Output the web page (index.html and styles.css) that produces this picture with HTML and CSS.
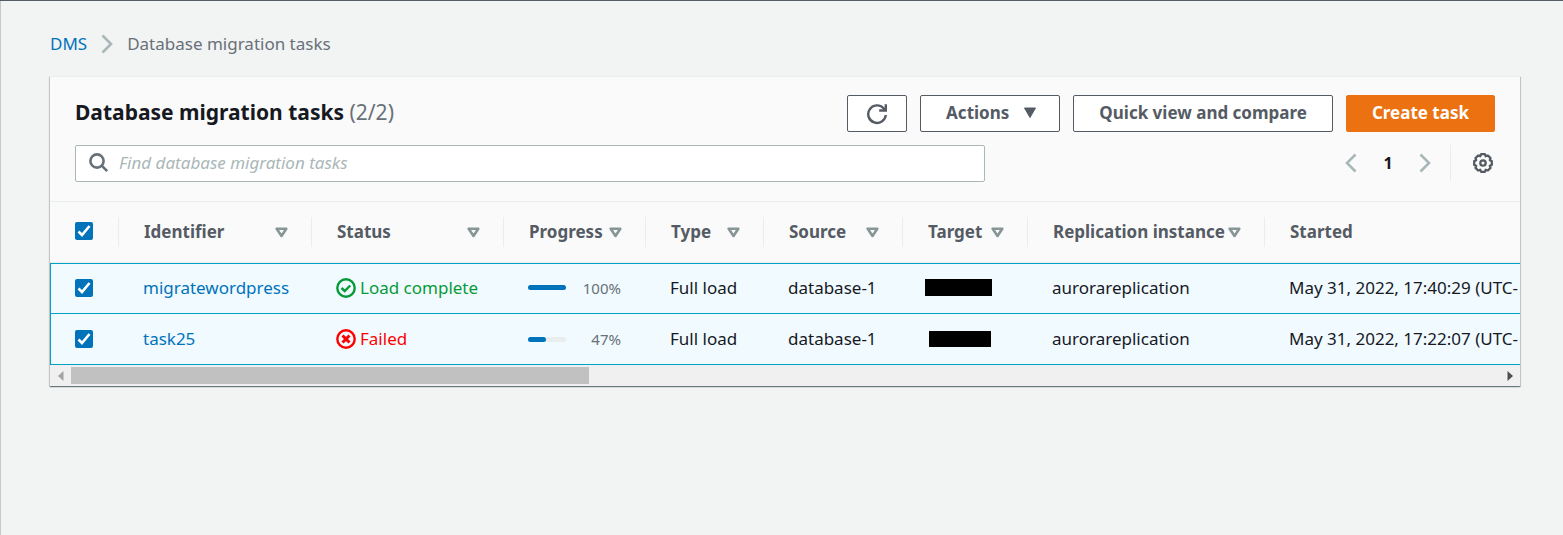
FILE: index.html
```html
<!DOCTYPE html>
<html lang="en">
<head>
<meta charset="utf-8">
<title>Database migration tasks</title>
<link rel="stylesheet" href="styles.css">
</head>
<body>
<svg class="defs" aria-hidden="true">
  <symbol id="sort" viewBox="0 0 13 11"><path d="M1.700 1.700h9.600L6.500 9z" fill="none" stroke="#879596" stroke-width="2.600" stroke-linejoin="round"/></symbol>
  <symbol id="chevron" viewBox="0 0 12 20"><path d="M1.500 1.500 10 10l-8.500 8.500" fill="none" stroke="#aab7b8" stroke-width="2.600"/></symbol>
</svg>
<main class="page">
  <nav class="breadcrumbs" aria-label="Breadcrumbs">
    <a href="#">DMS</a>
    <svg class="crumb-sep" aria-hidden="true"><use href="#chevron"/></svg>
    <span>Database migration tasks</span>
  </nav>
  <section class="card">
    <header class="card-header">
      <div class="title-row">
        <h1>Database migration tasks <span class="count">(2/2)</span></h1>
        <div class="actions">
          <button class="btn btn-icon" type="button" aria-label="Refresh">
            <svg width="22" height="22" viewBox="0 0 22 22" fill="none" stroke="currentColor" stroke-width="2.400"><path d="M19.800 12A8.800 8.800 0 1 1 17.500 5.200L19.500 7.500"/><path d="M19.800 1.200V7.500h-6.600"/></svg>
          </button>
          <button class="btn btn-menu" type="button">Actions <svg width="14" height="12" viewBox="0 0 14 12"><path d="M1.500 1h11L7 10.500z" fill="currentColor" stroke="currentColor" stroke-linejoin="round"/></svg></button>
          <button class="btn" type="button">Quick view and compare</button>
          <button class="btn btn-primary" type="button">Create task</button>
        </div>
      </div>
      <div class="tools-row">
        <label class="search">
          <svg width="20" height="20" viewBox="0 0 20 20" fill="none" stroke="#687078" stroke-width="2.600"><circle cx="8" cy="8" r="6.600"/><path d="m12.700 12.700 5.500 5.500"/></svg>
          <input type="search" placeholder="Find database migration tasks" aria-label="Find database migration tasks">
        </label>
        <div class="pager">
          <button class="plain" type="button" aria-label="Previous page"><svg class="flip" width="12" height="20"><use href="#chevron"/></svg></button>
          <button class="plain page-number" type="button">1</button>
          <button class="plain" type="button" aria-label="Next page"><svg width="12" height="20"><use href="#chevron"/></svg></button>
          <div class="settings">
            <button class="plain" type="button" aria-label="Preferences">
              <svg width="24" height="24" viewBox="-12 -12 24 24" fill="none" stroke="#545b64" stroke-width="2.300" stroke-linejoin="round"><path d="M8.800-1.900V1.900L6.800 2.800 7.500 4.900 4.900 7.500 2.800 6.800 1.900 8.800H-1.900L-2.800 6.800-4.900 7.500-7.500 4.900-6.800 2.800-8.800 1.900V-1.900L-6.800-2.800-7.500-4.900-4.900-7.500-2.800-6.800-1.900-8.800H1.900L2.800-6.800 4.900-7.500 7.500-4.900 6.800-2.800z"/><circle r="2.700"/></svg>
            </button>
          </div>
        </div>
      </div>
    </header>
    <div class="table-wrap">
      <table>
        <colgroup><col class="c-check"><col class="c-id"><col class="c-status"><col class="c-progress"><col class="c-type"><col class="c-source"><col class="c-target"><col class="c-instance"><col class="c-started"></colgroup>
        <thead>
          <tr>
            <th><input type="checkbox" checked aria-label="Select all tasks"></th>
            <th><div class="head">Identifier <svg><use href="#sort"/></svg></div></th>
            <th><div class="head">Status <svg><use href="#sort"/></svg></div></th>
            <th><div class="head">Progress <svg><use href="#sort"/></svg></div></th>
            <th><div class="head">Type <svg><use href="#sort"/></svg></div></th>
            <th><div class="head">Source <svg><use href="#sort"/></svg></div></th>
            <th><div class="head">Target <svg><use href="#sort"/></svg></div></th>
            <th><div class="head">Replication instance <svg><use href="#sort"/></svg></div></th>
            <th><div class="head">Started</div></th>
          </tr>
        </thead>
        <tbody>
          <tr>
            <td><input type="checkbox" checked aria-label="Select migratewordpress"></td>
            <td><a href="#">migratewordpress</a></td>
            <td><div class="status ok"><svg width="20" height="20" viewBox="0 0 20 20" fill="none" stroke="currentColor" stroke-width="2.400"><circle cx="10" cy="10" r="8.700"/><path d="m5.500 10 3.200 3 5.500-5.500"/></svg>Load complete</div></td>
            <td><div class="progress"><div class="track"><div class="fill" style="width:100%"></div></div><span>100%</span></div></td>
            <td>Full load</td>
            <td>database-1</td>
            <td class="target"><div class="redacted wide"></div></td>
            <td>aurorareplication</td>
            <td>May 31, 2022, 17:40:29 (UTC-</td>
          </tr>
          <tr>
            <td><input type="checkbox" checked aria-label="Select task25"></td>
            <td><a href="#">task25</a></td>
            <td><div class="status bad"><svg width="20" height="20" viewBox="0 0 20 20" fill="none" stroke="currentColor" stroke-width="2.400"><circle cx="10" cy="10" r="8.700"/><path d="m6.500 6.500 7 7m0-7-7 7" stroke-width="3"/></svg>Failed</div></td>
            <td><div class="progress"><div class="track"><div class="fill" style="width:47%"></div></div><span>47%</span></div></td>
            <td>Full load</td>
            <td>database-1</td>
            <td><div class="redacted"></div></td>
            <td>aurorareplication</td>
            <td>May 31, 2022, 17:22:07 (UTC-</td>
          </tr>
        </tbody>
      </table>
    </div>
    <div class="scrollbar">
      <button class="plain" type="button" aria-label="Scroll left"><svg width="6" height="10" viewBox="0 0 6 10"><path d="M5.500 0v10L0 5z" fill="#a3a3a3"/></svg></button>
      <div class="rail"><div class="thumb"></div></div>
      <button class="plain" type="button" aria-label="Scroll right"><svg width="6" height="10" viewBox="0 0 6 10"><path d="M.5 0v10L6 5z" fill="#505050"/></svg></button>
    </div>
  </section>
</main>
</body>
</html>
```
FILE: styles.css
```css
* { box-sizing: border-box; }
body {
  margin: 0;
  min-height: 100vh;
  background: #f2f3f3;
  border-top: 1px solid #545b64;
  color: #16191f;
  font: 17px/24px "Noto Sans", "Open Sans", sans-serif;
}
.defs { display: none; }
a { color: #0073bb; text-decoration: none; }
svg { flex: none; }
.page {
  min-height: calc(100vh - 1px);
  padding: 31px 43px 48px 49px;
  border-left: 1px solid #c3c9c9;
}
.breadcrumbs {
  display: flex;
  align-items: center;
  gap: 14px;
  margin-bottom: 20px;
  color: #687078;
}
.crumb-sep { width: 12px; height: 20px; }
.card {
  border-top: 1px solid #eaeded;
  background: #fafafa;
  box-shadow: 0 1px 1px 0 rgba(0, 28, 36, .4), 1px 1px 1px 0 rgba(0, 28, 36, .15), -1px 1px 1px 0 rgba(0, 28, 36, .15);
}
.card-header {
  display: flex;
  flex-direction: column;
  gap: 13px;
  padding: 18px 25px 19px;
  border-bottom: 1px solid #eaeded;
}
.title-row, .tools-row {
  display: flex;
  align-items: flex-start;
  justify-content: space-between;
}
h1 { margin: 0; font-size: 21px; line-height: 34px; font-weight: 700; }
.count { color: #687078; font-weight: 400; }
.actions { display: flex; gap: 13px; }
.btn {
  display: flex;
  align-items: center;
  justify-content: center;
  height: 37px;
  padding: 0 25px 2px;
  border: 1px solid #545b64;
  border-radius: 2px;
  background: #fff;
  color: #545b64;
  font: inherit;
  font-weight: 700;
  white-space: nowrap;
}
.btn-icon { width: 60px; padding: 0; }
.btn-menu { gap: 14px; padding-right: 22px; }
.btn-primary { border-color: #ec7211; background: #ec7211; color: #fff; }
.search {
  display: flex;
  align-items: center;
  gap: 10px;
  width: 910px;
  height: 37px;
  padding: 0 13px 2px;
  border: 1px solid #aab7b8;
  border-radius: 2px;
  background: #fff;
}
.search input {
  flex: 1;
  min-width: 0;
  padding: 0;
  border: 0;
  outline: 0;
  background: none;
  font: inherit;
}
.search input::placeholder { color: #aab7b8; font-style: italic; opacity: 1; }
.plain {
  display: flex;
  align-items: center;
  justify-content: center;
  padding: 0;
  border: 0;
  background: none;
  color: inherit;
  font: inherit;
}
.pager { display: flex; align-items: center; height: 36px; }
.page-number { width: 62px; font-weight: 700; font-size: 16px; }
.flip { transform: scaleX(-1); }
.settings {
  display: flex;
  height: 36px;
  margin-left: 19px;
  padding-left: 20px;
  border-left: 1px solid #eaeded;
}
.table-wrap { overflow: hidden; }
table {
  table-layout: fixed;
  width: 1580px;
  border-spacing: 0;
}
.c-check { width: 69px; }
.c-id { width: 193px; }
.c-status { width: 192px; }
.c-progress { width: 142px; }
.c-type { width: 118px; }
.c-source { width: 139px; }
.c-target { width: 125px; }
.c-instance { width: 237px; }
.c-started { width: 365px; }
th {
  height: 61px;
  padding: 0;
  border-bottom: 1px solid #eaeded;
  color: #545b64;
  text-align: left;
}
th:first-child { padding: 0 0 2px 25px; }
.head {
  display: flex;
  align-items: center;
  justify-content: space-between;
  height: 30px;
  padding: 0 24px 0 25px;
  white-space: nowrap;
}
th:not(:first-child) .head { border-left: 1px solid #eaeded; margin-left: -1px; }
.head svg { width: 13px; height: 11px; }
td {
  height: 51px;
  padding: 0 0 0 24px;
  border-bottom: 1px solid #00a1c9;
  background: #f1faff;
  white-space: nowrap;
}
td:first-child { border-left: 1px solid #00a1c9; }
tbody tr:first-child td { border-top: 1px solid #00a1c9; padding-bottom: 2px; }
input[type="checkbox"] {
  appearance: none;
  display: block;
  width: 18px;
  height: 18px;
  margin: 0;
  border-radius: 2px;
  background: #0073bb url("data:image/svg+xml,%3Csvg xmlns='http://www.w3.org/2000/svg' viewBox='0 0 18 18'%3E%3Cpath d='M3.500 9.500 7 13l7.500-9' fill='none' stroke='white' stroke-width='2.600'/%3E%3C/svg%3E");
}
.status { display: flex; align-items: center; gap: 4px; }
.ok { color: #079b38; }
.bad { color: #f00; }
.progress {
  display: flex;
  align-items: center;
  justify-content: space-between;
  padding-right: 25px;
  color: #687078;
  font-size: 15px;
}
.track { width: 38px; height: 5px; border-radius: 3px; background: #eaeded; }
.fill { height: 100%; border-radius: 3px; background: #0073bb; }
.redacted { width: 62px; height: 16px; margin-left: 2px; background: #000; }
tbody .target { padding-left: 20px; }
.target .redacted { margin-left: 2px; }
.redacted.wide { width: 67px; height: 17px; }
.scrollbar { display: flex; height: 21px; background: #f0f0f0; }
.scrollbar .plain { width: 21px; }
.rail { flex: 1; padding: 2px 0; }
.thumb { width: 518px; height: 17px; background: #c1c1c1; }
```
